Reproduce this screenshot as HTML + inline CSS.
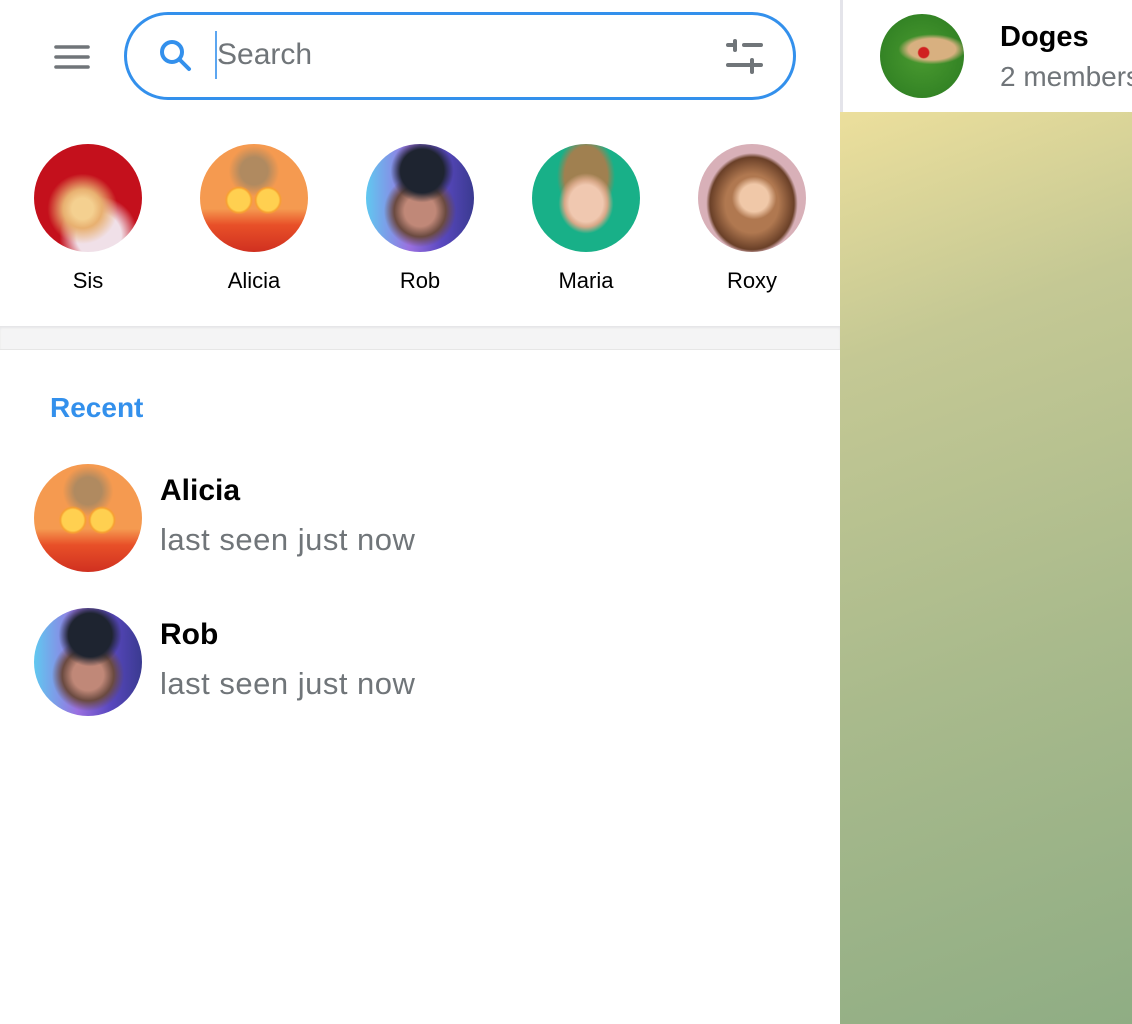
<!DOCTYPE html>
<html><head><meta charset="utf-8"><style>
*{margin:0;padding:0;box-sizing:border-box}
body{width:1132px;height:1024px;overflow:hidden;background:#fff;font-family:"Liberation Sans",sans-serif;position:relative}
.abs{position:absolute}
.av{position:absolute;width:108px;height:108px;border-radius:50%;overflow:hidden}
.nm{position:absolute;top:268px;width:140px;text-align:center;font-size:22px;color:#000}
.t{position:absolute;white-space:nowrap;line-height:1}
</style></head><body>
<svg class="abs" style="left:54px;top:44px" width="36" height="26" viewBox="0 0 36 26"><g stroke="#707579" stroke-width="3.6" stroke-linecap="round"><line x1="2" y1="3" x2="34" y2="3"/><line x1="2" y1="13" x2="34" y2="13"/><line x1="2" y1="23" x2="34" y2="23"/></g></svg>
<div class="abs" style="left:124px;top:12px;width:672px;height:88px;border:3px solid #3390ec;border-radius:44px"></div>
<svg class="abs" style="left:156px;top:36px" width="40" height="40" viewBox="0 0 40 40"><circle cx="16" cy="16" r="10" fill="none" stroke="#3390ec" stroke-width="4"/><line x1="23.5" y1="23.5" x2="33" y2="33" stroke="#3390ec" stroke-width="4" stroke-linecap="round"/></svg>
<div class="abs" style="left:215px;top:31px;width:2px;height:48px;background:#3390ec;opacity:.8"></div>
<div class="t" style="left:217px;top:40px;font-size:30px;color:#707579">Search</div>
<svg class="abs" style="left:724px;top:36px" width="42" height="40" viewBox="0 0 42 40"><g stroke="#707579" stroke-width="4" stroke-linecap="round"><line x1="4" y1="9" x2="11" y2="9"/><line x1="11" y1="5" x2="11" y2="14"/><line x1="20" y1="9" x2="37" y2="9"/><line x1="4" y1="29" x2="28" y2="29"/><line x1="28" y1="24" x2="28" y2="36"/><line x1="28" y1="29" x2="37" y2="29"/></g></svg>

<div class="av" style="left:34px;top:144px;background:radial-gradient(circle at 45% 60%,#f4d090 0 12%,#e8b070 22%,transparent 40%),radial-gradient(circle at 60% 85%,#f0e0e8 0 20%,transparent 35%),#c4101c"></div>
<div class="av" style="left:200px;top:144px;background:radial-gradient(circle at 36% 52%,#ffd050 0 12%,#f7a030 14%,transparent 16%),radial-gradient(circle at 63% 52%,#ffd050 0 12%,#f7a030 14%,transparent 16%),radial-gradient(circle at 50% 25%,#b08a60 0 14%,transparent 26%),linear-gradient(#f59a50 0 60%,#e85028 75%,#d03020)"></div>
<div class="av" style="left:366px;top:144px;background:radial-gradient(circle at 52% 25%,#1e2430 0 22%,transparent 32%),radial-gradient(circle at 50% 62%,#c08878 0 18%,#6a4a40 30%,transparent 42%),linear-gradient(90deg,#60c8f0,#9a70e0 40%,#5a48c0 70%,#3a3a90)"></div>
<div class="av" style="left:532px;top:144px;background:radial-gradient(ellipse at 50% 55%,#f0c8b0 0 22%,#d8a888 28%,transparent 36%),radial-gradient(ellipse at 50% 30%,#a08050 0 28%,transparent 38%),#18b088"></div>
<div class="av" style="left:698px;top:144px;background:radial-gradient(ellipse at 52% 50%,#f0c8a8 0 18%,transparent 28%),radial-gradient(ellipse at 50% 55%,#b07850 0 35%,#6a4028 55%,transparent 60%),#d8b0b8"></div>
<div class="nm" style="left:18px">Sis</div>
<div class="nm" style="left:184px">Alicia</div>
<div class="nm" style="left:350px">Rob</div>
<div class="nm" style="left:516px">Maria</div>
<div class="nm" style="left:682px">Roxy</div>

<div class="abs" style="left:0;top:326px;width:840px;height:24px;background:#f4f4f5;box-shadow:inset 0 2px 2px rgba(0,0,0,.06);border-bottom:1px solid #e6e6e6"></div>

<div class="t" style="left:50px;top:394px;font-size:28px;font-weight:bold;color:#3390ec">Recent</div>

<div class="av" style="left:34px;top:464px;background:radial-gradient(circle at 36% 52%,#ffd050 0 12%,#f7a030 14%,transparent 16%),radial-gradient(circle at 63% 52%,#ffd050 0 12%,#f7a030 14%,transparent 16%),radial-gradient(circle at 50% 25%,#b08a60 0 14%,transparent 26%),linear-gradient(#f59a50 0 60%,#e85028 75%,#d03020)"></div>
<div class="t" style="left:160px;top:476px;font-size:30px;font-weight:bold;color:#000">Alicia</div>
<div class="t" style="left:160px;top:524px;font-size:31px;letter-spacing:0.5px;color:#707579">last seen just now</div>

<div class="av" style="left:34px;top:608px;background:radial-gradient(circle at 52% 25%,#1e2430 0 22%,transparent 32%),radial-gradient(circle at 50% 62%,#c08878 0 18%,#6a4a40 30%,transparent 42%),linear-gradient(90deg,#60c8f0,#9a70e0 40%,#5a48c0 70%,#3a3a90)"></div>
<div class="t" style="left:160px;top:620px;font-size:30px;font-weight:bold;color:#000">Rob</div>
<div class="t" style="left:160px;top:668px;font-size:31px;letter-spacing:0.5px;color:#707579">last seen just now</div>

<div class="abs" style="left:840px;top:0;width:3px;height:112px;background:#e4e4ea"></div>
<div class="abs" style="left:840px;top:112px;width:292px;height:912px;background:linear-gradient(160deg,#ecdf9c 0%,#c4c894 25%,#a9ba8c 60%,#8fad84 100%)"></div>
<div class="abs" style="left:880px;top:14px;width:84px;height:84px;border-radius:50%;background:radial-gradient(circle at 52% 46%,#d02020 0 8%,transparent 10%),radial-gradient(ellipse 40% 18% at 62% 42%,#d8b080 0 70%,transparent 100%),radial-gradient(circle,#4a9a30,#2a7a20)"></div>
<div class="t" style="left:1000px;top:23px;font-size:29px;font-weight:bold;color:#000">Doges</div>
<div class="t" style="left:1000px;top:63px;font-size:28px;color:#707579">2 members</div>
</body></html>
